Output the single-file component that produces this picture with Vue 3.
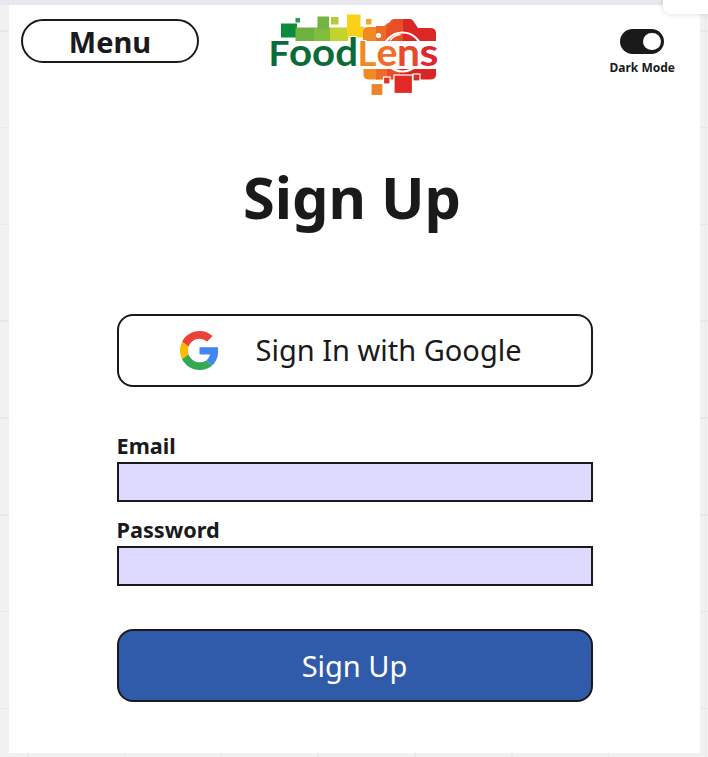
<script setup>
import { ref } from 'vue'

const dark = ref(true)
const email = ref('')
const password = ref('')
</script>

<template>
  <div class="canvas">
    <div class="corner"></div>
    <main class="board">
      <header class="top">
        <button class="menu">Menu</button>
        <svg class="logo" viewBox="260 5 190 95" role="img" aria-label="FoodLens">
          <rect x="281" y="23.5" width="16" height="14" fill="#0d8a3c" />
          <rect x="295.500" y="18" width="4.500" height="4.500" fill="#2f9a4a" />
          <rect x="295.500" y="27.500" width="19" height="13.500" fill="#6db33f" />
          <rect x="314" y="27.500" width="17" height="13.500" fill="#83bd40" />
          <rect x="317.500" y="16.500" width="11.500" height="13" fill="#74b440" />
          <rect x="331" y="17" width="7.500" height="7.500" fill="#b2cc38" />
          <rect x="330" y="27.500" width="18" height="13.500" fill="#c2d22f" />
          <path d="M347 14.500h13.500v12h4v11h-17.500z" fill="#fbd018" />
          <rect x="366" y="19" width="5.500" height="5.500" fill="#f4a62a" />
          <path d="M363 41V31q1-4 5-4h17v14z" fill="#f28a24" />
          <path d="M376 26h8l4-3h8v18h-20z" fill="#ee6a25" />
          <path d="M386 27l5-6.500q1-1.500 3-1.500h15v22h-23z" fill="#ea4e27" />
          <path d="M403 19h7q2 0 3 1.500l5 7.500h12q6 0 6 5v8h-33z" fill="#dc2825" />
          <path d="M363.500 69h16v10.500h-10q-6 0-6-5z" fill="#f28a24" />
          <path d="M376 69h15v10.500h-15z" fill="#ee6a25" />
          <path d="M387 69h14v10.500h-14z" fill="#ea4e27" />
          <path d="M400 69h36v5.500q0 5-6 5h-30z" fill="#d92625" />
          <circle cx="378.500" cy="35.500" r="2.600" fill="#fff" />
          <circle cx="402.500" cy="52" r="19.500" fill="none" stroke="#fff" stroke-width="2.200" />
          <path d="M390 40.500q4-5.500 10.500-6" fill="none" stroke="#fff" stroke-width="1.600" />
          <g stroke="#fff" stroke-width="1.200">
            <rect x="371" y="83.500" width="12" height="12" fill="#ee8428" />
            <rect x="383.500" y="77" width="6.500" height="7" fill="#df3527" />
            <rect x="394" y="75" width="18.500" height="18.500" fill="#e32926" />
            <rect x="413" y="74" width="7" height="7" fill="#dc2b2b" />
          </g>
          <rect x="362" y="42" width="78" height="26.500" fill="#fff" />
          <g class="wordmark">
            <text class="cap" x="268.500" y="65.500" textLength="21" lengthAdjust="spacingAndGlyphs" fill="#0b6b38">F</text>
            <text x="289" y="65.500" textLength="69" lengthAdjust="spacingAndGlyphs" fill="#0b6b38">ood</text>
            <text class="cap" x="357.500" y="65.500" textLength="19" lengthAdjust="spacingAndGlyphs" fill="#f08a25">L</text>
            <text x="376.500" y="65.500" textLength="21" lengthAdjust="spacingAndGlyphs" fill="#ee7028">e</text>
            <text x="397" y="65.500" textLength="23" lengthAdjust="spacingAndGlyphs" fill="#e74a2b">n</text>
            <text x="419.500" y="65.500" textLength="19" lengthAdjust="spacingAndGlyphs" fill="#dc2630">s</text>
          </g>
        </svg>
        <div class="mode">
          <button class="toggle" :class="{ on: dark }" aria-label="Dark Mode" @click="dark = !dark"></button>
          <span>Dark Mode</span>
        </div>
      </header>

      <h1>Sign Up</h1>

      <form class="form" @submit.prevent>
        <button type="button" class="action google">
          <svg class="g" viewBox="0 0 48 48" aria-hidden="true">
            <path fill="#EA4335" d="M24 9.500c3.540 0 6.710 1.220 9.210 3.600l6.850-6.850C35.900 2.380 30.470 0 24 0 14.620 0 6.510 5.380 2.560 13.220l7.980 6.190C12.430 13.720 17.740 9.500 24 9.500z" />
            <path fill="#4285F4" d="M46.980 24.550c0-1.570-.15-3.090-.38-4.550H24v9.020h12.940c-.58 2.960-2.260 5.480-4.780 7.180l7.730 6c4.510-4.180 7.090-10.360 7.090-17.650z" />
            <path fill="#FBBC05" d="M10.530 28.590c-.48-1.450-.76-2.990-.76-4.590s.27-3.140.76-4.590l-7.980-6.190C.92 16.460 0 20.120 0 24c0 3.880.92 7.540 2.560 10.780l7.970-6.190z" />
            <path fill="#34A853" d="M24 48c6.480 0 11.930-2.130 15.890-5.810l-7.730-6c-2.150 1.450-4.920 2.300-8.160 2.300-6.260 0-11.570-4.220-13.470-9.910l-7.980 6.190C6.510 42.620 14.620 48 24 48z" />
          </svg>
          <span>Sign In with Google</span>
        </button>
        <label for="email">Email</label>
        <input id="email" v-model="email" type="email" />
        <label for="password">Password</label>
        <input id="password" v-model="password" type="password" />
        <button class="action submit">Sign Up</button>
      </form>
    </main>
  </div>
</template>

<style>
body {
  margin: 0;
}
</style>

<style scoped>
.canvas {
  position: relative;
  box-sizing: border-box;
  width: 708px;
  height: 757px;
  padding: 5px 8px 4px 9px;
  overflow: hidden;
  font-family: "Noto Sans", sans-serif;
  color: #1a1a1a;
  background:
    linear-gradient(#e8e8ee, #e8e8ee) 0 0 / 100% 5px no-repeat,
    repeating-linear-gradient(to bottom, #e8e8e8 0 1.5px, transparent 1.5px 96.8px) 0 30px / 100% 727px no-repeat,
    repeating-linear-gradient(to right, #e8e8e8 0 1.5px, transparent 1.5px 96.8px) 27px 0 / 681px 100% no-repeat,
    #f1f1f1;
}

.corner {
  position: absolute;
  top: -10px;
  right: -10px;
  width: 55px;
  height: 24px;
  border-radius: 8px;
  background: #fff;
  box-shadow: 0 0 6px rgba(30, 30, 60, 0.16);
}

.board {
  box-sizing: border-box;
  height: 748px;
  background: #fff;
}

button,
input {
  box-sizing: border-box;
  margin: 0;
  padding: 0;
  font-family: inherit;
  color: inherit;
}

.top {
  display: grid;
  grid-template-columns: 242px 190px 1fr;
  height: 95px;
  padding-left: 9px;
}

.menu {
  width: 178px;
  height: 44px;
  margin: 14px 0 0 3px;
  padding-top: 1px;
  border: 2.4px solid #1a1a1a;
  border-radius: 22px;
  background: #fff;
  font-size: 29px;
  font-weight: 700;
  line-height: 38px;
}

.logo {
  width: 190px;
  height: 95px;
}

.wordmark {
  font-family: Lato, sans-serif;
  font-size: 39px;
  font-weight: 700;
  stroke: #fff;
  stroke-width: 2px;
  paint-order: stroke;
}

.cap {
  font-size: 34px;
}

.mode {
  display: flex;
  flex-direction: column;
  align-items: center;
  margin: 24px 25px 0 auto;
  font-size: 12px;
  font-weight: 700;
  line-height: 16px;
}

.toggle {
  display: flex;
  align-items: center;
  width: 44px;
  height: 25px;
  margin-bottom: 6px;
  padding: 0 3.5px;
  border: 0;
  border-radius: 13px;
  background: #1a1a1a;
}

.toggle::after {
  content: "";
  width: 17.5px;
  height: 17.5px;
  border-radius: 50%;
  background: #fff;
}

.toggle.on {
  justify-content: flex-end;
}

h1 {
  margin: 57px 0 0;
  padding-right: 5px;
  font-size: 57.7px;
  font-weight: 700;
  line-height: 80px;
  text-align: center;
}

.form {
  display: flex;
  flex-direction: column;
  width: 476px;
  margin: 77px 0 0 107.500px;
}

.action {
  display: flex;
  align-items: center;
  height: 73px;
  border: 2.4px solid #1a1a1a;
  border-radius: 16px;
  background: #fff;
  font-size: 29px;
  line-height: 40px;
}

.google {
  gap: 37px;
  margin-bottom: 44px;
  padding-left: 61px;
}

.google span {
  padding-bottom: 1px;
}

.g {
  width: 39px;
  height: 39px;
}

label {
  height: 31px;
  font-size: 21.700px;
  font-weight: 700;
  line-height: 30px;
}

input {
  height: 40px;
  margin: 0 0 13px;
  border: 2.4px solid #1a1a1a;
  border-radius: 0;
  outline: 0;
  background: #ddd9ff;
  font-size: 20px;
}

.submit {
  justify-content: center;
  margin-top: 30px;
  background: #305bab;
  color: #fff;
}
</style>
